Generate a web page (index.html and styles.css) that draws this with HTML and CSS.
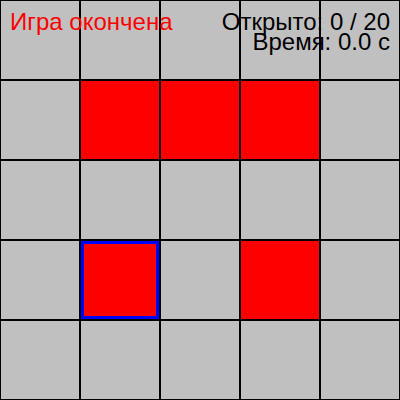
FILE: index.html
```html
<!DOCTYPE html>
<html lang="ru">
<head>
<meta charset="UTF-8">
<title>Игра</title>
<link rel="stylesheet" href="styles.css">
</head>
<body>

<div class="board">
    <div class="grid">
        <div class="cell"></div>
        <div class="cell"></div>
        <div class="cell"></div>
        <div class="cell"></div>
        <div class="cell"></div>

        <div class="cell"></div>
        <div class="cell red"></div>
        <div class="cell red"></div>
        <div class="cell red"></div>
        <div class="cell"></div>

        <div class="cell"></div>
        <div class="cell"></div>
        <div class="cell"></div>
        <div class="cell"></div>
        <div class="cell"></div>

        <div class="cell"></div>
        <div class="cell red selected"></div>
        <div class="cell"></div>
        <div class="cell red"></div>
        <div class="cell"></div>

        <div class="cell"></div>
        <div class="cell"></div>
        <div class="cell"></div>
        <div class="cell"></div>
        <div class="cell"></div>
    </div>

    <div class="hud">
        <div class="status">Игра окончена</div>
        <div class="stats">
            <div>Открыто: 0 / 20</div>
            <div>Время: 0.0 с</div>
        </div>
    </div>
</div>

</body>
</html>
```

FILE: styles.css
```css
body {
    margin: 0;
    padding: 0;
    font-family: "Liberation Sans", Arial, sans-serif;
}
.board {
    position: relative;
    width: 400px;
    height: 400px;
}
.grid {
    display: grid;
    grid-template-columns: repeat(5, 80px);
    grid-template-rows: repeat(5, 80px);
}
.cell {
    box-sizing: border-box;
    border: 1px solid #000;
    background-color: #c0c0c0;
}
.cell.red {
    background-color: #ff0000;
}
.cell.selected {
    box-shadow: inset 0 0 0 3px #0000ff;
}
.hud {
    position: absolute;
    top: 0;
    left: 0;
    right: 0;
    display: flex;
    justify-content: space-between;
    padding: 12px 10px 0 10px;
    font-size: 24px;
    line-height: 20px;
}
.status {
    color: #ff0000;
}
.stats {
    color: #000;
    text-align: right;
}
```
